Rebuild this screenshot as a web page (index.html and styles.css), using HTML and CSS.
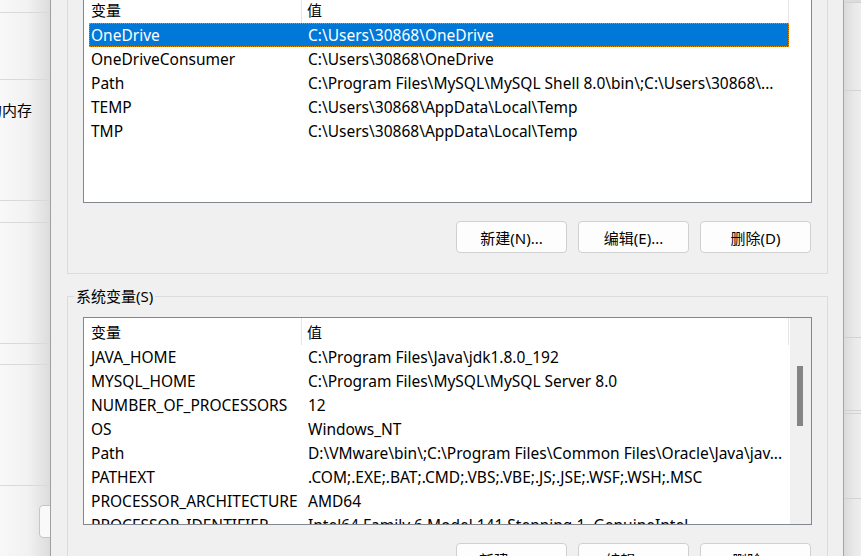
FILE: index.html
```html
<!DOCTYPE html>
<html lang="zh-CN">
<head>
<meta charset="utf-8">
<title>环境变量</title>
<link rel="stylesheet" href="styles.css">
</head>
<body>
<div class="screen">
  <aside class="bg-left">
    <div class="bg-row r1"></div>
    <div class="bg-row r2"></div>
    <div class="bg-row r3"><span class="mem">的内存</span></div>
    <div class="bg-row r4"></div>
    <div class="bg-row r3"></div>
    <div class="bg-row r6"></div>
    <div class="bg-row r3"></div>
    <div class="bg-last"><div class="bg-btn"></div></div>
  </aside>

  <main class="dialog">
    <section class="group user">
      <div class="listbox">
        <div class="lv">
          <div class="lv-header">
            <div class="hcell name">变量</div>
            <div class="hcell value">值</div>
          </div>
          <div class="rows">
            <div class="row selected"><span class="n">OneDrive</span><span class="v">C:\Users\30868\OneDrive</span></div>
            <div class="row"><span class="n">OneDriveConsumer</span><span class="v">C:\Users\30868\OneDrive</span></div>
            <div class="row"><span class="n">Path</span><span class="v">C:\Program Files\MySQL\MySQL Shell 8.0\bin\;C:\Users\30868\...</span></div>
            <div class="row"><span class="n">TEMP</span><span class="v">C:\Users\30868\AppData\Local\Temp</span></div>
            <div class="row"><span class="n">TMP</span><span class="v">C:\Users\30868\AppData\Local\Temp</span></div>
          </div>
        </div>
      </div>
      <div class="buttons">
        <button class="btn">新建(N)...</button>
        <button class="btn">编辑(E)...</button>
        <button class="btn">删除(D)</button>
      </div>
    </section>

    <section class="group system">
      <span class="legend">系统变量(S)</span>
      <div class="listbox">
        <div class="lv">
          <div class="lv-header">
            <div class="hcell name">变量</div>
            <div class="hcell value">值</div>
          </div>
          <div class="rows">
            <div class="row"><span class="n">JAVA_HOME</span><span class="v">C:\Program Files\Java\jdk1.8.0_192</span></div>
            <div class="row"><span class="n">MYSQL_HOME</span><span class="v">C:\Program Files\MySQL\MySQL Server 8.0</span></div>
            <div class="row"><span class="n">NUMBER_OF_PROCESSORS</span><span class="v">12</span></div>
            <div class="row"><span class="n">OS</span><span class="v">Windows_NT</span></div>
            <div class="row"><span class="n">Path</span><span class="v">D:\VMware\bin\;C:\Program Files\Common Files\Oracle\Java\jav...</span></div>
            <div class="row"><span class="n">PATHEXT</span><span class="v">.COM;.EXE;.BAT;.CMD;.VBS;.VBE;.JS;.JSE;.WSF;.WSH;.MSC</span></div>
            <div class="row"><span class="n">PROCESSOR_ARCHITECTURE</span><span class="v">AMD64</span></div>
            <div class="row"><span class="n">PROCESSOR_IDENTIFIER</span><span class="v">Intel64 Family 6 Model 141 Stepping 1, GenuineIntel</span></div>
          </div>
        </div>
        <div class="scrollbar"><div class="thumb"></div></div>
      </div>
      <div class="buttons">
        <button class="btn">新建(W)...</button>
        <button class="btn">编辑(I)...</button>
        <button class="btn">删除(L)</button>
      </div>
    </section>
  </main>

  <aside class="bg-right">
    <div class="rr a"></div>
    <div class="rr b"></div>
    <div class="rr c"></div>
    <div class="rr d"></div>
    <div class="rr e"></div>
    <div class="rr f"></div>
  </aside>
</div>
</body>
</html>
```

FILE: styles.css
```css
* { box-sizing: border-box; }

html, body {
  margin: 0;
  padding: 0;
}

body {
  width: 861px;
  height: 556px;
  overflow: hidden;
  background: #f0f0f0;
  font-family: "Noto Sans", "Noto Sans CJK SC", sans-serif;
  font-size: 15.5px;
  color: #000;
}

.screen {
  display: flex;
  width: 861px;
  height: 556px;
  overflow: hidden;
}

/* background window, left */
.bg-left {
  width: 50px;
  flex: none;
  display: flex;
  flex-direction: column;
  overflow: hidden;
  background: linear-gradient(to right, #f8f8f8 0%, #f2f2f2 55%, #dcdcdc 100%);
}

.bg-row {
  flex: none;
  border-bottom: 1px solid #d9d9d9;
  white-space: nowrap;
}

.r1 { height: 13px; }
.r2 { height: 67px; }
.r3 { height: 121px; }
.r4 { height: 22px; }
.r6 { height: 21px; }

.mem {
  display: block;
  margin-left: -13px;
  padding-top: 20px;
  line-height: 20px;
  font-size: 15px;
}

.bg-last {
  flex: 1;
  padding: 19px 0 0 39px;
}

.bg-btn {
  width: 40px;
  height: 33px;
  border: 1px solid #c6c6c6;
  border-radius: 4px;
  background: #f9f9f9;
}

/* dialog */
.dialog {
  flex: none;
  width: 794px;
  border-left: 1px solid #a0a0a0;
  border-right: 1px solid #a6a6a6;
  background: #f0f0f0;
  padding: 0 15px 0 16px;
  display: flex;
  flex-direction: column;
}

.group {
  position: relative;
  flex: none;
  border: 1px solid #dcdcdc;
  padding: 20px 15px;
}

.group.user { margin-top: -26px; }
.group.system { margin-top: 22px; }

.legend {
  position: absolute;
  top: -11px;
  left: 6px;
  padding: 0 2px;
  line-height: 20px;
  font-size: 15px;
  background: #f0f0f0;
  white-space: nowrap;
}

.listbox {
  height: 208px;
  border: 1px solid #828790;
  background: #fff;
  display: flex;
  overflow: hidden;
}

.lv {
  flex: 1;
  min-width: 0;
  display: flex;
  flex-direction: column;
  overflow: hidden;
}

.lv-header {
  flex: none;
  height: 27px;
  display: flex;
  font-size: 15px;
}

.hcell {
  flex: none;
  display: flex;
  align-items: center;
  border-right: 1px solid #e5e5e5;
  white-space: nowrap;
}

.hcell.name { width: 218px; padding-left: 7px; }
.hcell.value { width: 487px; padding-left: 5px; }

.rows {
  padding-left: 5px;
}

.row {
  display: flex;
  align-items: center;
  width: 700px;
  height: 24px;
  white-space: nowrap;
}

.row .n {
  flex: none;
  width: 213px;
  padding-left: 2px;
  overflow: hidden;
}

.row .v {
  flex: 1;
  min-width: 0;
  padding-left: 6px;
  overflow: hidden;
}

.row.selected {
  background: #0078d7;
  color: #fff;
  outline: 1px dotted #f28a00;
  outline-offset: -1px;
}

.scrollbar {
  flex: none;
  width: 21px;
  background: #f0f0f0;
  padding: 48px 0 0 7px;
}

.thumb {
  width: 6px;
  height: 60px;
  background: #858585;
}

.buttons {
  display: flex;
  justify-content: flex-end;
  gap: 11px;
  margin-top: 18px;
  padding-right: 1px;
}

.btn {
  flex: none;
  width: 111px;
  height: 32px;
  padding: 0;
  border: 1px solid #d0d0d0;
  border-radius: 4px;
  background: #fdfdfd;
  font: inherit;
  font-size: 15px;
  color: #000;
}

/* background window, right */
.bg-right {
  flex: 1;
  display: flex;
  flex-direction: column;
  background: linear-gradient(to right, #dadada 0%, #e9e9e9 60%, #eeeeee 100%);
}

.rr {
  flex: none;
  border-bottom: 1px solid #d2d2d2;
}

.rr.a { height: 3px; background: #dcdcdc; }
.rr.b { height: 88px; }
.rr.c { height: 247px; }
.rr.d { height: 73px; }
.rr.e { height: 3px; }
.rr.f { height: 85px; }
```
